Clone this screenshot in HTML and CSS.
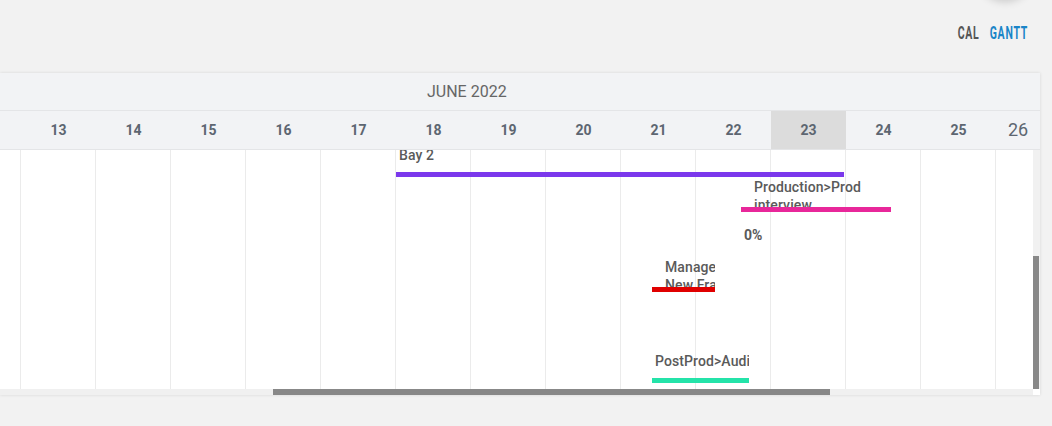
FILE: index.html
```html
<!DOCTYPE html>
<html lang="en">

<head>
    <meta charset="UTF-8">
    <meta name="viewport" content="width=device-width, initial-scale=1.0">
    <title>Gantt</title>
    <link rel="stylesheet" href="styles.css">
</head>

<body>
    <div class="fab"></div>

    <div class="topbar">
        <div class="views">
            <span class="view">CAL</span>
            <span class="view active">GANTT</span>
        </div>
    </div>

    <div class="gantt">
        <div class="month-row">JUNE 2022</div>
        <div class="day-row">
            <div class="day first"></div>
            <div class="day">13</div>
            <div class="day">14</div>
            <div class="day">15</div>
            <div class="day">16</div>
            <div class="day">17</div>
            <div class="day">18</div>
            <div class="day">19</div>
            <div class="day">20</div>
            <div class="day">21</div>
            <div class="day">22</div>
            <div class="day today">23</div>
            <div class="day">24</div>
            <div class="day">25</div>
            <div class="day last">26</div>
        </div>

        <div class="gantt-body">
            <div class="canvas">
                <div class="cols">
                    <div class="col first"></div>
                    <div class="col"></div>
                    <div class="col"></div>
                    <div class="col"></div>
                    <div class="col"></div>
                    <div class="col"></div>
                    <div class="col"></div>
                    <div class="col"></div>
                    <div class="col"></div>
                    <div class="col"></div>
                    <div class="col"></div>
                    <div class="col"></div>
                    <div class="col"></div>
                    <div class="col"></div>
                    <div class="col last"></div>
                </div>

                <div class="task" style="left: 396px; top: -4px; width: 448px;">
                    <div class="task-label">Bay 2</div>
                    <div class="task-bar purple"></div>
                </div>
                <div class="task" style="left: 741px; top: 28px; width: 150px;">
                    <div class="task-label wrap inset">Production&gt;Prod interview</div>
                    <div class="task-bar pink"></div>
                    <div class="task-progress">0%</div>
                </div>
                <div class="task" style="left: 652px; top: 108px; width: 63px;">
                    <div class="task-label wrap inset">Manage New Frames</div>
                    <div class="task-bar red"></div>
                </div>
                <div class="task" style="left: 652px; top: 202px; width: 97px;">
                    <div class="task-label">PostProd&gt;Audio</div>
                    <div class="task-bar green"></div>
                </div>
            </div>
            <div class="vscroll">
                <div class="vthumb"></div>
            </div>
            <div class="hscroll">
                <div class="hthumb"></div>
            </div>
            <div class="corner"></div>
        </div>
    </div>
</body>

</html>
```

FILE: styles.css
```css
body {
    font-family: Roboto, "Liberation Sans", sans-serif;
    margin: 0;
    padding: 0;
    background: #f2f2f2;
    height: 426px;
    overflow: hidden;
    position: relative;
}

.fab {
    position: absolute;
    left: 978px;
    top: -56px;
    width: 54px;
    height: 54px;
    border-radius: 50%;
    background: #f2f2f2;
    box-shadow: 0 3px 10px rgba(0, 0, 0, 0.2);
}

.topbar {
    height: 73px;
    box-sizing: border-box;
    display: flex;
    justify-content: flex-end;
    padding: 24px 24px 0 0;
}

.views {
    display: flex;
    gap: 14px;
    height: 18px;
}

.view {
    font-weight: 700;
    font-size: 17.5px;
    line-height: 18px;
    letter-spacing: 1.3px;
    color: #555;
    display: inline-block;
    transform: scaleX(0.6);
    transform-origin: right center;
    margin-left: -22px;
}

.view.active {
    color: #1a85c8;
    margin-left: -30px;
}

.gantt {
    width: 1040px;
    background: #f2f3f5;
    box-shadow: 0 0 3px rgba(0, 0, 0, 0.12);
}

.month-row {
    height: 37px;
    line-height: 37px;
    padding-left: 427px;
    border-bottom: 1px solid #e4e5e7;
    font-size: 16px;
    color: #666;
}

.day-row {
    display: flex;
    height: 38px;
    border-bottom: 1px solid #e4e5e7;
}

.day {
    width: 75px;
    flex: none;
    text-align: center;
    line-height: 38px;
    font-size: 14px;
    font-weight: 700;
    color: #5d6671;
}

.day.first {
    width: 21px;
}

.day.today {
    background: #dcdcdc;
}

.day.last {
    flex: 1;
    font-weight: 400;
    font-size: 18px;
}

.gantt-body {
    display: grid;
    grid-template-columns: 1033px 7px;
    grid-template-rows: 239px 6px;
}

.canvas {
    position: relative;
    overflow: hidden;
    background: #fff;
}

.cols {
    display: flex;
    height: 100%;
}

.col {
    width: 75px;
    flex: none;
    box-sizing: border-box;
    border-right: 1px solid #ebebeb;
}

.col.first {
    width: 21px;
}

.col.last {
    flex: 1;
    border-right: none;
}

.task {
    position: absolute;
    overflow: hidden;
}

.task-label {
    height: 26px;
    min-width: 92px;
    box-sizing: border-box;
    padding-left: 3px;
    overflow: hidden;
    font-size: 14px;
    font-weight: 500;
    line-height: 18px;
    letter-spacing: 0.1px;
    color: #5a5a5a;
}

.task-label.wrap {
    height: 29px;
}

.task-label.inset {
    padding-left: 13px;
}

.task-bar {
    height: 5px;
}

.purple {
    background: #7b38ec;
}

.pink {
    background: #e8279a;
}

.red {
    background: #e00000;
}

.green {
    background: #24e3a9;
}

.task-progress {
    margin-top: 14px;
    padding-left: 3px;
    font-size: 14px;
    font-weight: 700;
    line-height: 18px;
    color: #5a5a5a;
}

.vscroll {
    background: #f1f1f1;
}

.vthumb {
    margin-top: 106px;
    width: 6px;
    height: 133px;
    background: #888;
}

.hscroll {
    background: #f0f0f0;
}

.hthumb {
    margin-left: 273px;
    width: 557px;
    height: 6px;
    background: #888;
}

.corner {
    background: #fff;
}
```
